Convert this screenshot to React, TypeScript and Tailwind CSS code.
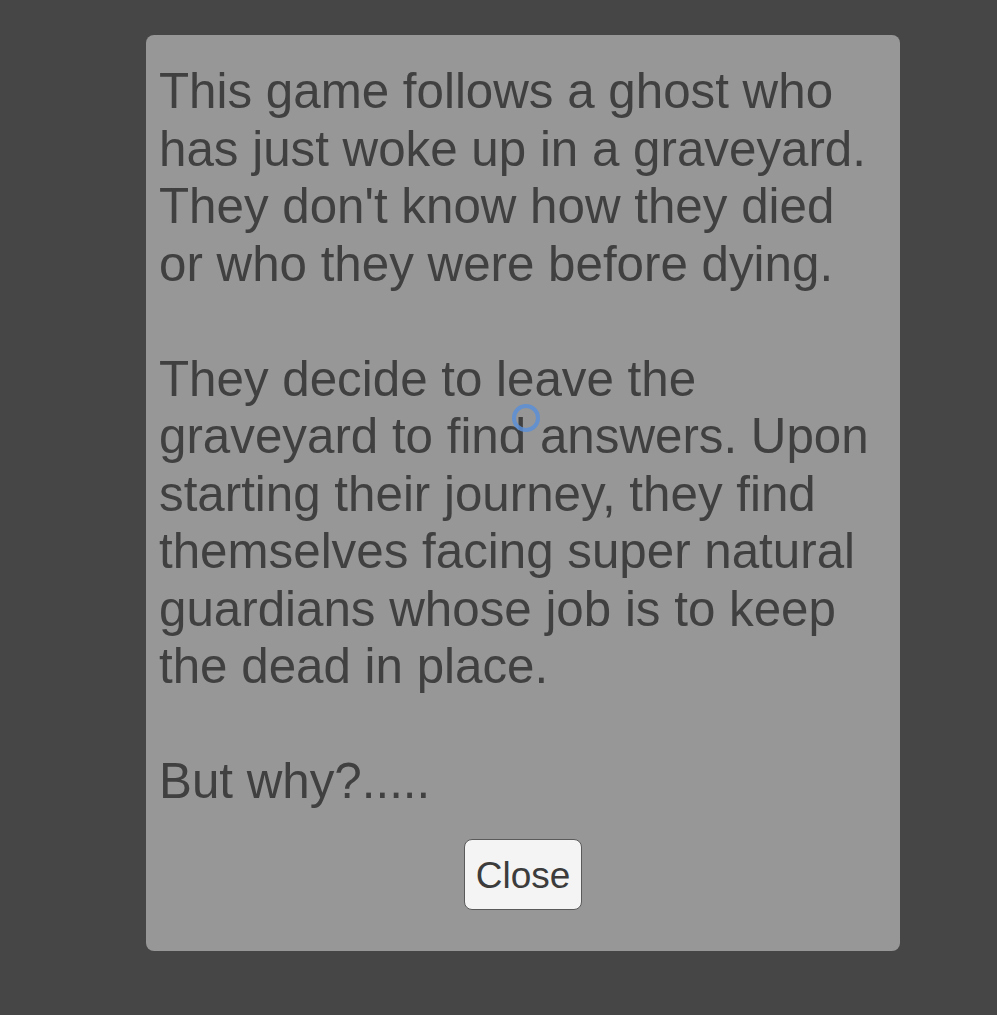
const story = `This game follows a ghost who has just woke up in a graveyard. They don't know how they died or who they were before dying.

They decide to leave the graveyard to find answers. Upon starting their journey, they find themselves facing super natural guardians whose job is to keep the dead in place.

But why?.....`;

export default function App() {
  return (
    <div className="relative min-h-[1015px] w-full bg-[#464646] pt-[35px] font-['Liberation_Sans',Arial,sans-serif]">
      <div className="ml-[146px] flex h-[916px] w-[754px] flex-col rounded-[8px] bg-[#979797] px-[13px] pt-[27px]">
        <p className="whitespace-pre-line text-[49.3px] leading-[57.5px] text-[#404040]">
          {story}
        </p>
        <div className="mt-[29px] flex justify-center">
          <button className="h-[71px] w-[118px] rounded-[8px] border border-[#5a5a5a] bg-[#f4f4f4] pt-[4px] text-[37px] text-[#3c3c3c]">
            Close
          </button>
        </div>
      </div>
      <div className="absolute left-[512px] top-[404px] h-[28px] w-[28px] rounded-full border-[4px] border-[#5b8fd6]/85 blur-[0.6px]" />
    </div>
  );
}
